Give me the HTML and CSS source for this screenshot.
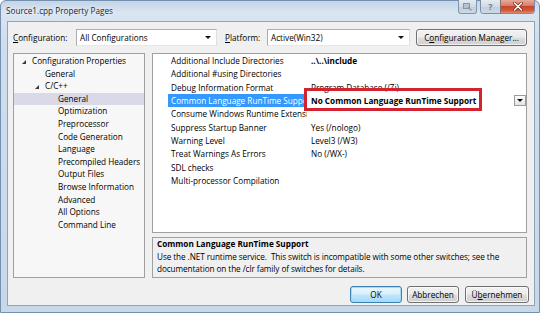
FILE: index.html
```html
<!DOCTYPE html>
<html>
<head>
<meta charset="utf-8">
<link rel="stylesheet" href="styles.css">
</head>
<body>
<div class="window">
  <div class="titlebar">
    <span class="title">Source1.cpp Property Pages</span>
    <div class="caption">
      <div class="cbtn cbtn-ctx"><svg width="9" height="8" viewBox="0 0 9 8"><rect x="0.5" y="0.5" width="6" height="5" fill="#b8c2cc" stroke="#8b96a2"/><path d="M5 4 L8.5 7.5" stroke="#8b96a2" stroke-width="1.2"/></svg></div>
      <div class="cgroup">
        <div class="cbtn cbtn-help">?</div>
        <div class="cbtn cbtn-close"><svg width="10" height="9" viewBox="0 0 10 9"><path d="M1.5 1 L8.5 8 M8.5 1 L1.5 8" stroke="#6b2a20" stroke-width="3" stroke-linecap="round"/><path d="M1.5 1 L8.5 8 M8.5 1 L1.5 8" stroke="#fff" stroke-width="1.6" stroke-linecap="round"/></svg></div>
      </div>
    </div>
  </div>
  <div class="frame">
    <div class="client">
      <div class="config-row">
        <span class="lbl lbl-config"><u>C</u>onfiguration:</span>
        <div class="combo combo-config"><span>All Configurations</span><i class="arrow"></i></div>
        <span class="lbl lbl-platform"><u>P</u>latform:</span>
        <div class="combo combo-platform"><span>Active(Win32)</span><i class="arrow"></i></div>
        <div class="btn btn-mgr">C<u>o</u>nfiguration Manager...</div>
      </div>
      <div class="main">
        <div class="tree">
          <div class="node lv0"><i class="tri"></i>Configuration Properties</div>
          <div class="node lv1">General</div>
          <div class="node lv1"><i class="tri"></i>C/C++</div>
          <div class="node lv2 sel">General</div>
          <div class="node lv2">Optimization</div>
          <div class="node lv2">Preprocessor</div>
          <div class="node lv2">Code Generation</div>
          <div class="node lv2">Language</div>
          <div class="node lv2">Precompiled Headers</div>
          <div class="node lv2">Output Files</div>
          <div class="node lv2">Browse Information</div>
          <div class="node lv2">Advanced</div>
          <div class="node lv2">All Options</div>
          <div class="node lv2">Command Line</div>
        </div>
        <div class="rightcol">
          <div class="grid">
            <div class="row"><div class="name">Additional Include Directories</div><div class="val bold">..\..\include</div></div>
            <div class="row"><div class="name">Additional #using Directories</div><div class="val"></div></div>
            <div class="row"><div class="name">Debug Information Format</div><div class="val">Program Database (/Zi)</div></div>
            <div class="row row-sel"><div class="name">Common Language RunTime Support</div><div class="val bold">No Common Language RunTime Support<i class="dd"><i class="arrow"></i></i></div><div class="redbox"></div></div>
            <div class="row"><div class="name">Consume Windows Runtime Extension</div><div class="val"></div></div>
            <div class="row"><div class="name">Suppress Startup Banner</div><div class="val">Yes (/nologo)</div></div>
            <div class="row"><div class="name">Warning Level</div><div class="val">Level3 (/W3)</div></div>
            <div class="row"><div class="name">Treat Warnings As Errors</div><div class="val">No (/WX-)</div></div>
            <div class="row"><div class="name">SDL checks</div><div class="val"></div></div>
            <div class="row"><div class="name">Multi-processor Compilation</div><div class="val"></div></div>
          </div>
          <div class="desc">
            <div class="desc-title">Common Language RunTime Support</div>
            <div>Use the .NET runtime service.&nbsp; This switch is incompatible with some other switches; see the</div>
            <div>documentation on the /clr family of switches for details.</div>
          </div>
        </div>
      </div>
      <div class="buttons">
        <div class="btn btn-ok">OK</div>
        <div class="btn btn-cancel">Abbrechen</div>
        <div class="btn btn-apply">Ü<u>b</u>ernehmen</div>
      </div>
    </div>
  </div>
</div>
</body>
</html>
```
FILE: styles.css
```css
html, body {
  margin: 0;
  padding: 0;
}
body {
  width: 540px;
  height: 313px;
  overflow: hidden;
  font-family: "Open Sans", "Noto Sans", sans-serif;
  font-size: 8.2px;
  color: #000;
  background: #fff;
}
u { text-decoration: underline; text-underline-offset: 1px; }

.window {
  width: 540px;
  height: 313px;
  box-sizing: border-box;
  border: 1px solid #7590ae;
  border-radius: 6px 6px 0 0;
  background: linear-gradient(180deg, #c4d5e8 0px, #d9e5f1 12px, #cfdeec 40px, #c8d8e9 100%);
  display: flex;
  flex-direction: column;
}

.titlebar {
  height: 20px;
  display: flex;
  align-items: flex-start;
}
.title {
  padding-left: 5px;
  line-height: 20px;
  font-size: 8.2px;
  color: #1e1e1e;
  text-shadow: 0 0 4px #eef4fa, 0 0 2px #eef4fa;
}
.caption {
  margin-left: auto;
  margin-right: 4px;
  margin-top: -1px;
  display: flex;
  gap: 3px;
}
.cbtn {
  height: 14px;
  box-sizing: border-box;
  display: flex;
  align-items: center;
  justify-content: center;
}
.cbtn-ctx {
  width: 19px;
  border: 1px solid #8196ad;
  border-top: none;
  border-radius: 0 0 3px 3px;
  background: linear-gradient(180deg, #e4ebf2, #d0dbe6 50%, #bfcedd 51%, #ccd9e6);
}
.cgroup {
  display: flex;
  border: 1px solid #7a8ea6;
  border-top: none;
  border-radius: 0 0 4px 4px;
  overflow: hidden;
}
.cbtn-help {
  width: 20px;
  height: 13px;
  border-right: 1px solid #8a6e6a;
  background: linear-gradient(180deg, #e4ebf2, #d0dbe6 50%, #bfcedd 51%, #ccd9e6);
  font-size: 9px;
  font-weight: bold;
  color: #6b7a8c;
}
.cbtn-close {
  width: 33px;
  height: 13px;
  background: linear-gradient(180deg, #e9a99b, #d77b66 45%, #c7452c 50%, #d25a3c 80%, #e08a6a);
}

.frame {
  flex: 1;
  display: flex;
  padding: 0 4px 6px 6px;
}
.client {
  flex: 1;
  border: 1px solid #8fa3b9;
  background: #f0f0f0;
  padding: 6px 7px 0 5px;
  display: flex;
  flex-direction: column;
}

/* config row */
.config-row {
  height: 17px;
  margin-top: 1px;
  display: flex;
  align-items: center;
}
.lbl { white-space: nowrap; }
.lbl-config { width: 63px; }
.lbl-platform { width: 42px; margin-left: 8px; }
.combo {
  height: 17px;
  box-sizing: border-box;
  border: 1px solid #abadb3;
  border-right-color: #dbdfe6;
  border-bottom-color: #e3e9ef;
  background: #fff;
  display: flex;
  align-items: center;
  padding-left: 3px;
  padding-right: 5px;
}
.combo span { flex: 1; white-space: nowrap; }
.combo-config { width: 141px; }
.combo-platform { width: 143px; }
.arrow {
  display: block;
  width: 0;
  height: 0;
  border-left: 3px solid transparent;
  border-right: 3px solid transparent;
  border-top: 3px solid #111;
}

.btn {
  box-sizing: border-box;
  height: 17px;
  border: 1px solid #707070;
  border-radius: 3px;
  background: linear-gradient(180deg, #f2f2f2 0%, #ebebeb 48%, #dddddd 52%, #cfcfcf 100%);
  box-shadow: inset 0 0 0 1px rgba(255,255,255,0.7);
  display: flex;
  align-items: center;
  justify-content: center;
  white-space: nowrap;
}
.btn-mgr { width: 111px; margin-left: 6px; }

/* main */
.main {
  margin-top: 7px;
  height: 225px;
  display: flex;
  gap: 7px;
}
.tree {
  width: 132px;
  box-sizing: border-box;
  border: 1px solid #a0a0a0;
  background: #f7f7f7;
  padding-top: 1px;
}
.node {
  height: 12.6px;
  line-height: 12.6px;
  white-space: nowrap;
  display: flex;
  align-items: center;
  position: relative;
}
.lv0 { padding-left: 18px; }
.lv1 { padding-left: 31px; }
.lv2 { padding-left: 44px; }
.sel { background: #d9d9e7; }
.tri {
  display: block;
  width: 0;
  height: 0;
  border-right: 4px solid #3a3a3a;
  border-top: 4px solid transparent;
  margin-left: -10px;
  margin-right: 6px;
  margin-top: 1px;
}

.rightcol {
  flex: 1;
  display: flex;
  flex-direction: column;
  gap: 4px;
}
.grid {
  height: 180px;
  box-sizing: border-box;
  border: 1px solid #a0a0a0;
  background: #fff;
}
.row {
  height: 13.33px;
  line-height: 13.33px;
  display: flex;
  padding-left: 15px;
  position: relative;
}
.name {
  width: 139px;
  box-sizing: border-box;
  padding-left: 3px;
  white-space: nowrap;
  overflow: hidden;
}
.val {
  flex: 1;
  padding-left: 4px;
  white-space: nowrap;
  display: flex;
  align-items: center;
}
.bold { font-weight: bold; }
.row-sel .name { background: #3399ff; color: #fff; }
.dd {
  margin-left: auto;
  width: 12px;
  height: 11px;
  box-sizing: border-box;
  border: 1px solid #9a9a9a;
  background: linear-gradient(180deg, #ffffff, #e4e4e4);
  display: flex;
  align-items: center;
  justify-content: center;
}
.redbox {
  position: absolute;
  left: 151px;
  top: -6px;
  width: 178px;
  height: 23px;
  box-sizing: border-box;
  border: 3px solid #d42330;
}

.desc {
  height: 41px;
  box-sizing: border-box;
  border: 1px solid #a0a0a0;
  background: #f0f0f0;
  padding-left: 4px;
  line-height: 12.5px;
  white-space: nowrap;
  letter-spacing: -0.08px;
}
.desc-title { font-weight: bold; letter-spacing: 0; }

/* bottom buttons */
.buttons {
  margin-top: 8px;
  margin-right: -2px;
  display: flex;
  justify-content: flex-end;
  gap: 5px;
}
.btn-ok {
  width: 52px;
  border-color: #3c7fb1;
  background: linear-gradient(180deg, #eaf6fd 0%, #d9f0fc 48%, #bee6fd 52%, #a7d9f5 100%);
  box-shadow: inset 0 0 0 1px #9fdcf6;
}
.btn-cancel { width: 52px; }
.btn-apply { width: 64px; margin-left: 1px; }
```
